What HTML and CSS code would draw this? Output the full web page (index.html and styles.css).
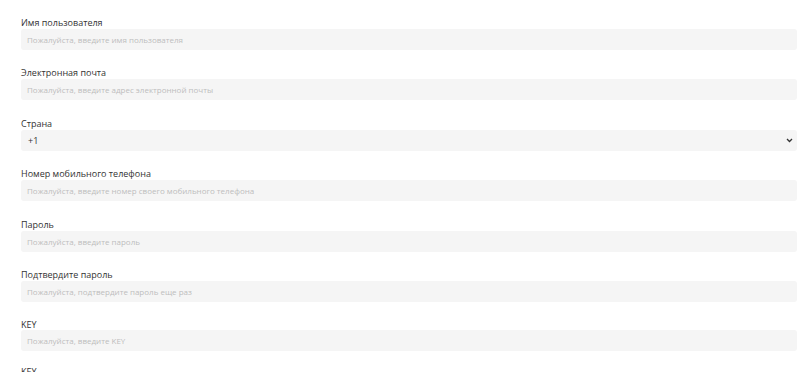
FILE: index.html
```html
<!DOCTYPE html>
<html lang="ru">

<head>
    <meta charset="UTF-8">
    <meta name="viewport" content="width=device-width, initial-scale=1.0">
    <title>Регистрация</title>
    <link rel="stylesheet" href="styles.css">
</head>

<body>
    <form class="reg-form">
        <div class="field">
            <label class="field-label">Имя пользователя</label>
            <input class="field-input" type="text" placeholder="Пожалуйста, введите имя пользователя">
        </div>
        <div class="field">
            <label class="field-label">Электронная почта</label>
            <input class="field-input" type="text" placeholder="Пожалуйста, введите адрес электронной почты">
        </div>
        <div class="field">
            <label class="field-label">Страна</label>
            <div class="select-wrap">
                <select class="field-input field-select">
                    <option>+1</option>
                </select>
                <svg class="select-arrow" width="7" height="5" viewBox="0 0 7 5">
                    <path d="M1 1 L3.5 3.5 L6 1" fill="none" stroke="#333" stroke-width="1.3"/>
                </svg>
            </div>
        </div>
        <div class="field">
            <label class="field-label">Номер мобильного телефона</label>
            <input class="field-input" type="text" placeholder="Пожалуйста, введите номер своего мобильного телефона">
        </div>
        <div class="field">
            <label class="field-label">Пароль</label>
            <input class="field-input" type="password" placeholder="Пожалуйста, введите пароль">
        </div>
        <div class="field">
            <label class="field-label">Подтвердите пароль</label>
            <input class="field-input" type="password" placeholder="Пожалуйста, подтвердите пароль еще раз">
        </div>
        <div class="field field-latin">
            <label class="field-label">KEY</label>
            <input class="field-input" type="text" placeholder="Пожалуйста, введите KEY">
        </div>
        <div class="field field-latin">
            <label class="field-label">KEY</label>
            <input class="field-input" type="text" placeholder="Пожалуйста, введите KEY">
        </div>
    </form>
</body>

</html>
```

FILE: styles.css
```css
* {
    margin: 0;
    padding: 0;
    box-sizing: border-box;
}

body {
    background: #fff;
    font-family: "Open Sans", "Noto Sans", sans-serif;
    color: #333;
    overflow: hidden;
}

.reg-form {
    padding: 15.5px 6px 0 21px;
}

.field {
    margin-bottom: 16.6px;
}

.field-label {
    display: block;
    font-size: 9px;
    line-height: 13px;
    color: #333;
}

.field-latin {
    margin-bottom: 15px;
}

.field-latin .field-label {
    line-height: 11px;
}

.field-input {
    display: block;
    width: 100%;
    height: 21px;
    border: none;
    outline: none;
    border-radius: 3px;
    background: #f5f5f5;
    padding: 0 6px;
    font-family: inherit;
    font-size: 8px;
    color: #333;
}

.field-input::placeholder {
    color: #bdbdbd;
}

.select-wrap {
    position: relative;
}

.field-select {
    appearance: none;
    -webkit-appearance: none;
    padding-left: 7px;
    font-size: 9px;
}

.select-arrow {
    position: absolute;
    right: 4px;
    top: 8px;
}
```
